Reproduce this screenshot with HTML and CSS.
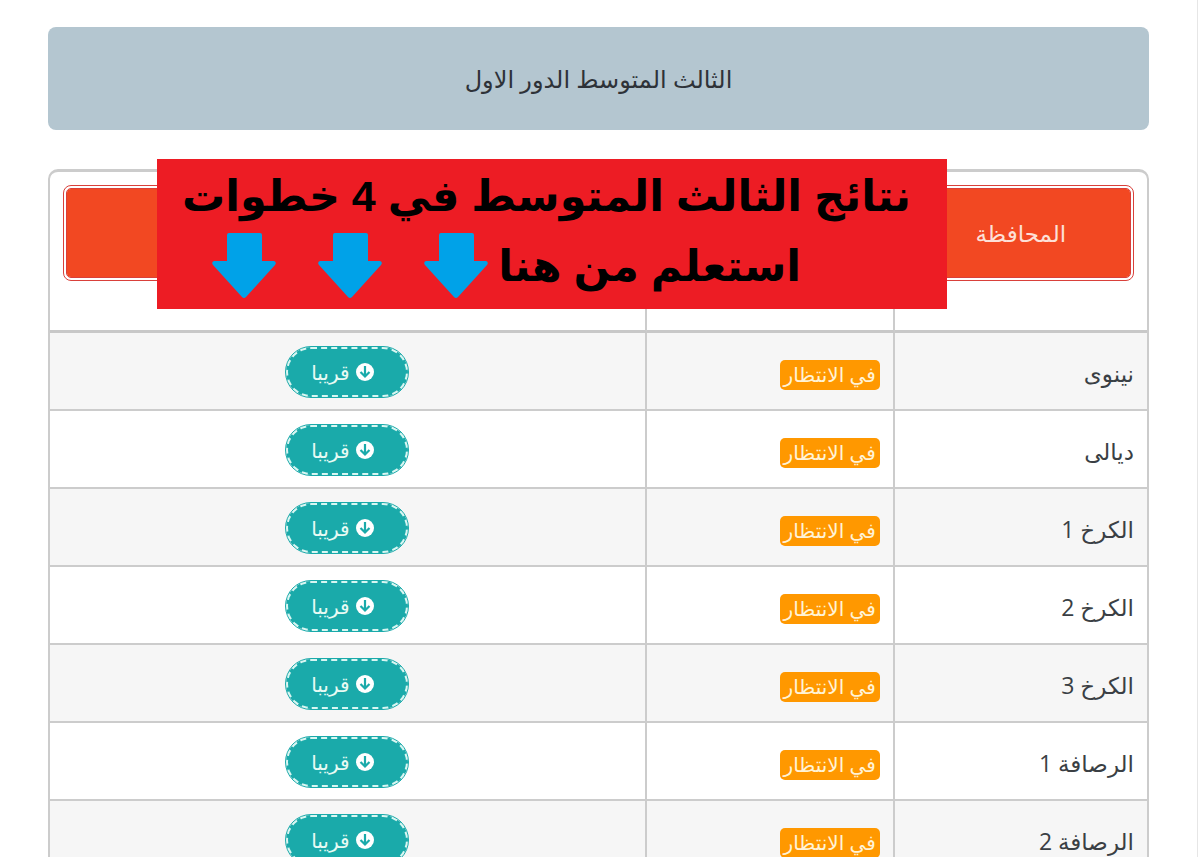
FILE: index.html
```
<!DOCTYPE html>
<html lang="ar" dir="rtl">
<head>
    <meta charset="UTF-8">
    <meta name="viewport" content="width=device-width, initial-scale=1.0">
    <title>الثالث المتوسط الدور الاول</title>
    <link rel="stylesheet" href="styles.css">
</head>
<body>
    <!-- Shared icons -->
    <svg class="sprite" aria-hidden="true">
        <symbol id="arrow-down" viewBox="0 0 64 66">
            <path d="M17 0H48Q50 0 50 2V28H62Q65 29 63 32L34 64Q32 66 30 64L1 32Q-1 29 2 28H15V2Q15 0 17 0Z"/>
        </symbol>
        <symbol id="circle-down" viewBox="0 0 18 18">
            <circle cx="9" cy="9" r="9" fill="#fff"/>
            <path d="M9 3V13.5M4.5 9L9 13.5L13.5 9" fill="none" stroke="#1aaaaa" stroke-width="2.2"/>
        </symbol>
    </svg>

    <main class="page">
        <h1 class="title">الثالث المتوسط الدور الاول</h1>

        <div class="results">
            <table class="table">
                <thead>
                    <tr>
                        <th class="col-city"><span class="head">المحافظة</span></th>
                        <th class="col-status"><span class="head"></span></th>
                        <th><span class="head"></span></th>
                    </tr>
                </thead>
                <tbody>
                    <tr>
                        <td>نينوى</td>
                        <td><span class="badge">في الانتظار</span></td>
                        <td class="action"><button class="btn" type="button"><svg class="icon"><use href="#circle-down"/></svg>قريبا</button></td>
                    </tr>
                    <tr>
                        <td>ديالى</td>
                        <td><span class="badge">في الانتظار</span></td>
                        <td class="action"><button class="btn" type="button"><svg class="icon"><use href="#circle-down"/></svg>قريبا</button></td>
                    </tr>
                    <tr>
                        <td>الكرخ 1</td>
                        <td><span class="badge">في الانتظار</span></td>
                        <td class="action"><button class="btn" type="button"><svg class="icon"><use href="#circle-down"/></svg>قريبا</button></td>
                    </tr>
                    <tr>
                        <td>الكرخ 2</td>
                        <td><span class="badge">في الانتظار</span></td>
                        <td class="action"><button class="btn" type="button"><svg class="icon"><use href="#circle-down"/></svg>قريبا</button></td>
                    </tr>
                    <tr>
                        <td>الكرخ 3</td>
                        <td><span class="badge">في الانتظار</span></td>
                        <td class="action"><button class="btn" type="button"><svg class="icon"><use href="#circle-down"/></svg>قريبا</button></td>
                    </tr>
                    <tr>
                        <td>الرصافة 1</td>
                        <td><span class="badge">في الانتظار</span></td>
                        <td class="action"><button class="btn" type="button"><svg class="icon"><use href="#circle-down"/></svg>قريبا</button></td>
                    </tr>
                    <tr>
                        <td>الرصافة 2</td>
                        <td><span class="badge">في الانتظار</span></td>
                        <td class="action"><button class="btn" type="button"><svg class="icon"><use href="#circle-down"/></svg>قريبا</button></td>
                    </tr>
                </tbody>
            </table>

            <!-- Banner over the table head -->
            <div class="banner">
                <p class="banner-line">نتائج الثالث المتوسط في 4 خطوات</p>
                <div class="banner-row">
                    <p class="banner-line">استعلم من هنا</p>
                    <div class="arrows">
                        <svg class="arrow"><use href="#arrow-down"/></svg>
                        <svg class="arrow"><use href="#arrow-down"/></svg>
                        <svg class="arrow"><use href="#arrow-down"/></svg>
                    </div>
                </div>
            </div>
        </div>
    </main>
</body>
</html>
```
FILE: styles.css
```
* {
    box-sizing: border-box;
}

body {
    margin: 0;
    background: #fff;
    color: #3a3f44;
    font-family: "Open Sans", "Noto Sans", "DejaVu Sans", sans-serif;
    font-size: 23px;
}

.sprite {
    position: absolute;
    width: 0;
    height: 0;
}

.page {
    margin-right: 2px;
    padding: 27px 48px 0;
    border-right: 1px solid #e6e6e6;
}

.title {
    margin: 0 0 39px;
    padding: 34px 16px 33px;
    border-radius: 8px;
    background: #b4c6d0;
    color: #2e3238;
    font-size: 24px;
    font-weight: normal;
    line-height: 36px;
    text-align: center;
}

/* Results table */
.results {
    position: relative;
}

.table {
    width: 100%;
    table-layout: fixed;
    border: 2px solid #ccc;
    border-top: 3px solid #ccc;
    border-radius: 10px;
    border-spacing: 0;
}

.col-city {
    width: 23%;
}

.col-status {
    width: 248px;
}

th {
    padding: 13px 13px 49px;
    border-bottom: 3px solid #c8c8c8;
    font-weight: normal;
}

.head {
    display: block;
    height: 96px;
    border: 4px double #d9403a;
    border-radius: 8px;
    background: #f24822;
    background-clip: padding-box;
    color: #fde0d8;
    line-height: 88px;
}

td {
    height: 78px;
    padding: 4px 13px 0;
    border-bottom: 2px solid #ccc;
    line-height: 32px;
}

th + th,
td + td {
    border-right: 2px solid #ccc;
}

tbody tr:nth-child(odd) {
    background: #f6f6f6;
}

.badge {
    display: inline-block;
    padding: 0 4px;
    border-radius: 5px;
    background: #ff9800;
    color: #fff3d6;
    font-size: 20px;
    line-height: 30px;
}

.action {
    padding-top: 2px;
    text-align: center;
}

.btn {
    display: inline-flex;
    align-items: center;
    justify-content: center;
    gap: 6px;
    min-width: 122px;
    height: 50px;
    padding: 0 32px 0 22px;
    border: 2px dashed #d8f6f2;
    border-radius: 25px;
    outline: 1px solid #1aaaaa;
    background: #1aaaaa;
    color: #e8fbf4;
    font-family: inherit;
    font-size: 20px;
}

.icon {
    width: 18px;
    height: 18px;
}

/* Banner */
.banner {
    position: absolute;
    top: -10px;
    right: 202px;
    width: 790px;
    height: 150px;
    padding: 2px 36px;
    background: #ed1c24;
    color: #000;
    font-family: "Liberation Sans", "DejaVu Sans", sans-serif;
    font-size: 43px;
    font-weight: bold;
    line-height: 70px;
    white-space: nowrap;
}

.banner-line {
    margin: 0;
}

.banner-row {
    display: flex;
    align-items: center;
    gap: 10px;
    padding-right: 110px;
}

.arrows {
    display: flex;
    gap: 42px;
}

.arrow {
    width: 64px;
    height: 66px;
    fill: #00a2e8;
}
```
